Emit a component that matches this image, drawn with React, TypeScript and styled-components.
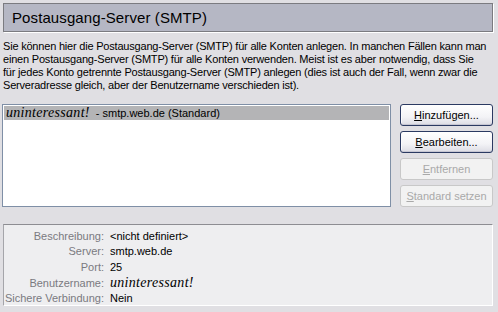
import styled, { createGlobalStyle } from "styled-components";

const GlobalStyle = createGlobalStyle`
  html, body {
    margin: 0;
    padding: 0;
    background: #e0dfe3;
  }
  body {
    font-family: "Liberation Sans", Arial, sans-serif;
    font-size: 11px;
    color: #000;
  }
`;

const Page = styled.div`
  width: 498px;
  height: 312px;
  box-sizing: border-box;
  padding: 3px 5px 0 3px;
  display: flex;
  flex-direction: column;
  overflow: hidden;
`;

const Header = styled.div`
  height: 29px;
  box-sizing: border-box;
  border: 1px solid #7b7b80;
  box-shadow: 1px 1px 0 #ffffff;
  background: #b5b7c4;
  display: flex;
  align-items: center;
  padding-left: 8px;
  font-size: 15px;
  letter-spacing: 0.1px;
`;

const Intro = styled.p`
  margin: 8px 0 0 0;
  line-height: 13px;
  font-size: 11px;
  letter-spacing: -0.2px;
  white-space: nowrap;
`;

const Middle = styled.div`
  display: flex;
  gap: 9px;
  margin: 12px 0 0 -1px;
`;

const List = styled.div`
  width: 389px;
  height: 103px;
  box-sizing: border-box;
  border: 1px solid #7f8fa6;
  background: #ffffff;
  padding: 1px;
`;

const ListRow = styled.div<{ selected?: boolean }>`
  height: 14px;
  display: flex;
  align-items: center;
  gap: 6px;
  padding-left: 2px;
  background: ${(p) => (p.selected ? "#b4b4b6" : "transparent")};
  white-space: nowrap;
`;

const Fancy = styled.span`
  font-family: "Liberation Serif", "DejaVu Serif", serif;
  font-style: italic;
  font-size: 14px;
  letter-spacing: 0.3px;
`;

const Buttons = styled.div`
  display: flex;
  flex-direction: column;
  gap: 5px;
`;

const Button = styled.button<{ disabled?: boolean }>`
  width: 93px;
  height: 22px;
  box-sizing: border-box;
  border-radius: 3px;
  font-family: "Liberation Sans", Arial, sans-serif;
  font-size: 11px;
  padding: 0;
  border: 1px solid ${(p) => (p.disabled ? "#c8c8c8" : "#2b3a62")};
  color: ${(p) => (p.disabled ? "#a9a9a9" : "#000000")};
  background: ${(p) =>
    p.disabled
      ? "#f2f2f2"
      : "linear-gradient(#ffffff 0%, #f3f3f6 60%, #dcdce4 100%)"};
  box-shadow: ${(p) =>
    p.disabled ? "none" : "inset 0 -1px 0 #c6c6d2, inset 1px 0 0 #fbfbfd"};
`;

const Key = styled.span`
  text-decoration: underline;
`;

const Details = styled.div`
  margin-top: 17px;
  height: 82px;
  box-sizing: border-box;
  border-top: 1px solid #8d8d92;
  border-left: 1px solid #a5a5aa;
  border-right: 1px solid #ffffff;
  border-bottom: 1px solid #ffffff;
  background: #eeeef0;
  padding-top: 3px;
  display: grid;
  grid-template-columns: 100px 1fr;
  grid-auto-rows: 15.6px;
  column-gap: 6px;
  align-items: center;
`;

const Label = styled.div`
  text-align: right;
  color: #7a7a80;
  white-space: nowrap;
`;

const Value = styled.div`
  white-space: nowrap;
`;

export default function App() {
  return (
    <>
      <GlobalStyle />
      <Page>
        <Header>Postausgang-Server (SMTP)</Header>
        <Intro>
          Sie können hier die Postausgang-Server (SMTP) für alle Konten anlegen. In manchen Fällen kann man
          <br />
          einen Postausgang-Server (SMTP) für alle Konten verwenden. Meist ist es aber notwendig, dass Sie
          <br />
          für jedes Konto getrennte Postausgang-Server (SMTP) anlegen (dies ist auch der Fall, wenn zwar die
          <br />
          Serveradresse gleich, aber der Benutzername verschieden ist).
        </Intro>
        <Middle>
          <List>
            <ListRow selected>
              <Fancy>uninteressant!</Fancy>
              <span>- smtp.web.de (Standard)</span>
            </ListRow>
          </List>
          <Buttons>
            <Button>
              <Key>H</Key>inzufügen...
            </Button>
            <Button>
              <Key>B</Key>earbeiten...
            </Button>
            <Button disabled>
              <Key>E</Key>ntfernen
            </Button>
            <Button disabled>
              <Key>S</Key>tandard setzen
            </Button>
          </Buttons>
        </Middle>
        <Details>
          <Label>Beschreibung:</Label>
          <Value>&lt;nicht definiert&gt;</Value>
          <Label>Server:</Label>
          <Value>smtp.web.de</Value>
          <Label>Port:</Label>
          <Value>25</Value>
          <Label>Benutzername:</Label>
          <Value>
            <Fancy>uninteressant!</Fancy>
          </Value>
          <Label>Sichere Verbindung:</Label>
          <Value>Nein</Value>
        </Details>
      </Page>
    </>
  );
}
